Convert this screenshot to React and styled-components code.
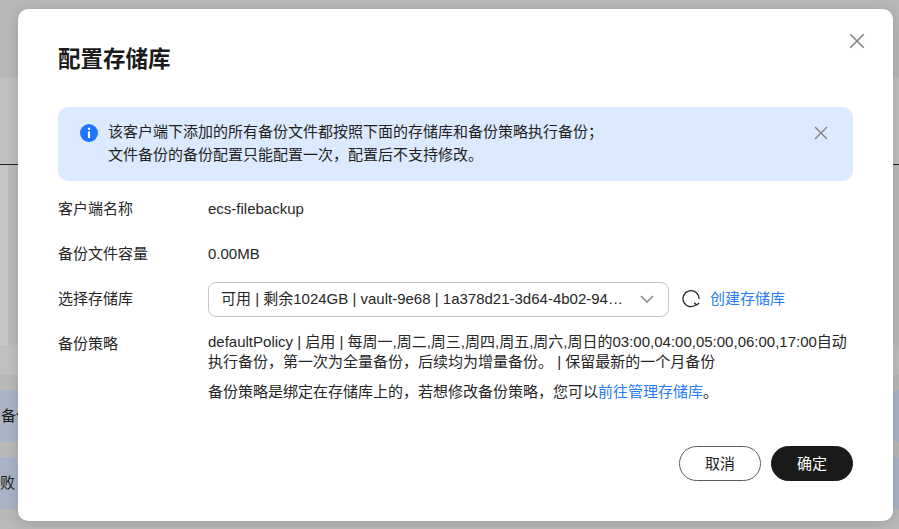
import React from "react";
import styled, { createGlobalStyle } from "styled-components";

const Global = createGlobalStyle`
  html, body { margin: 0; padding: 0; height: 100%; overflow: hidden; }
  body { font-family: "Liberation Sans", "Noto Sans CJK SC", sans-serif; color: #1a1a1a; }
  #root { height: 100%; }
`;

const Page = styled.div`
  position: relative;
  width: 899px;
  height: 529px;
  background: #b9b9b9;
  overflow: hidden;
  display: flex;
  flex-direction: column;
`;
const TopBand = styled.div`
  height: 77px;
  background: #b8b8b8;
`;
const UpperBand = styled.div`
  height: 87px;
  background: #c0c0c0;
`;
const Divider = styled.div`
  height: 1px;
  background: #222;
`;
const CardBand = styled.div`
  height: 180px;
  background: #bbb;
  display: flex;
`;
const CardEdge = styled.div`
  width: 8px;
  background: #c6c6c6;
`;
const GapBand = styled.div`
  height: 30px;
  background: #c0c0c0;
`;
const RowBand = styled.div`
  height: 52px;
  margin-top: ${p => p.$top}px;
  background: #a9b5c7;
  font-size: 15px;
  line-height: 52px;
  color: #1a1a1a;
  white-space: nowrap;
  padding-left: ${p => p.$pad}px;
`;
const Dialog = styled.section`
  position: absolute;
  left: 18px;
  top: 9px;
  width: 875px;
  height: 512px;
  box-sizing: border-box;
  padding: 36px 40px 0;
  background: #fff;
  border-radius: 10px;
  box-shadow: 0 2px 14px rgba(0, 0, 0, 0.16);
  display: flex;
  flex-direction: column;
`;
const Title = styled.h2`
  margin: 0;
  font-size: 22.5px;
  line-height: 30px;
  font-weight: 700;
  color: #1a1a1a;
`;
const CloseButton = styled.button`
  position: absolute;
  top: 23px;
  right: 27px;
  width: 18px;
  height: 18px;
  padding: 0;
  border: 0;
  background: none;
  display: flex;
`;
const Alert = styled.div`
  margin-top: 32px;
  height: 74px;
  box-sizing: border-box;
  padding: 13px 24px 0 22px;
  background: #dbeafe;
  border-radius: 10px;
  display: flex;
`;
const InfoIcon = styled.svg`
  width: 18px;
  height: 18px;
  margin-top: 4px;
  flex: none;
`;
const AlertText = styled.div`
  margin-left: 10px;
  flex: 1;
  font-size: 15px;
  line-height: 23px;
  color: #1f1f1f;
`;
const AlertClose = styled.button`
  width: 16px;
  height: 16px;
  margin-top: 5px;
  padding: 0;
  border: 0;
  background: none;
  display: flex;
`;
const Form = styled.div`
  margin-top: 17px;
  display: flex;
  flex-direction: column;
`;
const Row = styled.div`
  display: flex;
  align-items: ${p => (p.$center ? "center" : "flex-start")};
  height: ${p => p.$h}px;
  margin-bottom: ${p => p.$mb || 0}px;
  line-height: 22px;
`;
const Label = styled.div`
  width: 150px;
  flex: none;
  font-size: 15px;
  color: #262626;
`;
const Value = styled.div`
  font-size: 15px;
  color: #262626;
`;
const SelectBox = styled.div`
  width: 461px;
  height: 35px;
  flex: none;
  box-sizing: border-box;
  padding: 0 13px 0 12px;
  border: 1px solid #c4c4c4;
  border-radius: 8px;
  display: flex;
  align-items: center;
  justify-content: space-between;
  font-size: 15px;
  color: #262626;
`;
const SelectText = styled.span`
  white-space: nowrap;
`;
const Refresh = styled.svg`
  width: 18px;
  height: 18px;
  margin-left: 13px;
  flex: none;
`;
const LinkText = styled.a`
  color: #2a7bf6;
  font-size: 15px;
  text-decoration: none;
`;
const CreateLink = styled(LinkText)`
  margin-left: 10px;
`;
const Policy = styled.div`
  width: 645px;
  margin-top: -1px;
  font-size: 15px;
  line-height: 20px;
  color: #262626;
`;
const PolicyNote = styled.div`
  margin-top: 10px;
  font-size: 15px;
  line-height: 20px;
`;
const Footer = styled.div`
  margin-top: auto;
  margin-bottom: 40px;
  display: flex;
  justify-content: flex-end;
  gap: 10px;
`;
const Button = styled.button`
  width: 82px;
  height: 35px;
  padding: 0 0 3px;
  border-radius: 18px;
  box-sizing: border-box;
  font: 400 15px "Liberation Sans", "Noto Sans CJK SC", sans-serif;
  border: 1px solid ${p => (p.$primary ? "#1a1a1a" : "#5e5e5e")};
  background: ${p => (p.$primary ? "#1a1a1a" : "#fff")};
  color: ${p => (p.$primary ? "#fff" : "#1a1a1a")};
`;

const X = ({ size, color = "#808080" }) => (
  <svg width={size} height={size} viewBox="0 0 16 16" fill="none">
    <path d="M2 2L14 14M14 2L2 14" stroke={color} strokeWidth="1.4" />
  </svg>
);

export default function App() {
  return (
    <Page>
      <Global />
      <TopBand />
      <UpperBand />
      <Divider />
      <CardBand><CardEdge /></CardBand>
      <GapBand />
      <RowBand $top={15} $pad={1}>备份</RowBand>
      <RowBand $top={15} $pad={0}>败</RowBand>
      <Dialog>
        <Title>配置存储库</Title>
        <CloseButton aria-label="关闭"><X size={18} /></CloseButton>
        <Alert>
          <InfoIcon viewBox="0 0 18 18">
            <circle cx="9" cy="9" r="9" fill="#1f75ff" />
            <rect x="7.8" y="3.6" width="2.4" height="2.4" rx="1.2" fill="#fff" />
            <rect x="7.9" y="7.2" width="2.2" height="7" rx="0.6" fill="#fff" />
          </InfoIcon>
          <AlertText>
            该客户端下添加的所有备份文件都按照下面的存储库和备份策略执行备份；<br />
            文件备份的备份配置只能配置一次，配置后不支持修改。
          </AlertText>
          <AlertClose aria-label="关闭提示"><X size={16} /></AlertClose>
        </Alert>
        <Form>
          <Row $h={45}>
            <Label>客户端名称</Label>
            <Value>ecs-filebackup</Value>
          </Row>
          <Row $h={45}>
            <Label>备份文件容量</Label>
            <Value>0.00MB</Value>
          </Row>
          <Row $center $h={22} $mb={23}>
            <Label>选择存储库</Label>
            <SelectBox>
              <SelectText>可用 | 剩余1024GB | vault-9e68 | 1a378d21-3d64-4b02-94…</SelectText>
              <svg width="16" height="16" viewBox="0 0 16 16" fill="none">
                <path d="M2 5L8 11L14 5" stroke="#808080" strokeWidth="1.4" />
              </svg>
            </SelectBox>
            <Refresh viewBox="0 0 18 18" fill="none">
              <path d="M14.6 14.4A8 8 0 1 1 17 9" stroke="#262626" strokeWidth="1.3" />
              <path d="M12.3 12.8L14.6 15L17.2 13" stroke="#262626" strokeWidth="1.3" />
            </Refresh>
            <CreateLink href="#">创建存储库</CreateLink>
          </Row>
          <Row>
            <Label>备份策略</Label>
            <Policy>
              defaultPolicy | 启用 | 每周一,周二,周三,周四,周五,周六,周日的03:00,04:00,05:00,06:00,17:00自动执行备份，第一次为全量备份，后续均为增量备份。 | 保留最新的一个月备份
              <PolicyNote>
                备份策略是绑定在存储库上的，若想修改备份策略，您可以<LinkText href="#">前往管理存储库</LinkText>。
              </PolicyNote>
            </Policy>
          </Row>
        </Form>
        <Footer>
          <Button>取消</Button>
          <Button $primary>确定</Button>
        </Footer>
      </Dialog>
    </Page>
  );
}
